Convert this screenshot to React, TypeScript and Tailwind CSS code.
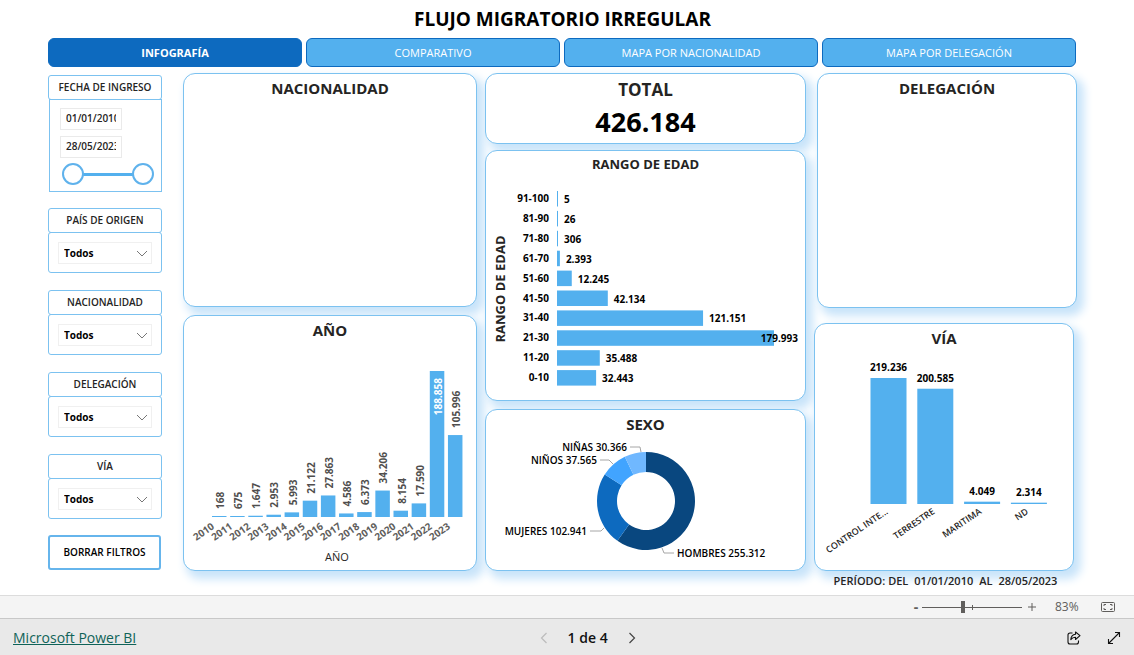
import type { ReactNode } from "react";
import clsx from "clsx";

const TABS = ["INFOGRAFÍA", "COMPARATIVO", "MAPA POR NACIONALIDAD", "MAPA POR DELEGACIÓN"];

const FILTERS = [
  { id: "pais", label: "PAÍS DE ORIGEN" },
  { id: "nacionalidad", label: "NACIONALIDAD" },
  { id: "delegacion", label: "DELEGACIÓN" },
  { id: "via", label: "VÍA" },
];

const YEARS = [
  { year: 2010, total: 168 },
  { year: 2011, total: 675 },
  { year: 2012, total: 1647 },
  { year: 2013, total: 2953 },
  { year: 2014, total: 5993 },
  { year: 2015, total: 21122 },
  { year: 2016, total: 27863 },
  { year: 2017, total: 4586 },
  { year: 2018, total: 6373 },
  { year: 2019, total: 34206 },
  { year: 2020, total: 8154 },
  { year: 2021, total: 17590 },
  { year: 2022, total: 188858 },
  { year: 2023, total: 105996 },
];

const AGES = [
  { range: "91-100", total: 5 },
  { range: "81-90", total: 26 },
  { range: "71-80", total: 306 },
  { range: "61-70", total: 2393 },
  { range: "51-60", total: 12245 },
  { range: "41-50", total: 42134 },
  { range: "31-40", total: 121151 },
  { range: "21-30", total: 179993 },
  { range: "11-20", total: 35488 },
  { range: "0-10", total: 32443 },
];

const ROUTES = [
  { name: "CONTROL INTE...", total: 219236 },
  { name: "TERRESTRE", total: 200585 },
  { name: "MARITIMA", total: 4049 },
  { name: "ND", total: 2314 },
];

type Slice = {
  name: string;
  total: number;
  color: string;
  line: string;
  x: number;
  y: number;
  anchor: "start" | "end";
};

const SEXES: Slice[] = [
  { name: "HOMBRES", total: 255312, color: "#09477f", line: "176,106 178,111 188,111", x: 191, y: 115, anchor: "start" },
  { name: "MUJERES", total: 102941, color: "#0d6abf", line: "118,86 115,89 104,89", x: 101, y: 93, anchor: "end" },
  { name: "NIÑOS", total: 37565, color: "#41a4ff", line: "127,22 123,18 114,18", x: 111, y: 22, anchor: "end" },
  { name: "NIÑAS", total: 30366, color: "#70b8ff", line: "155,10 154,5 144,5", x: 141, y: 9, anchor: "end" },
];

// thousands separated by dots
const format = (n: number) => String(n).replace(/\B(?=(\d{3})+$)/g, ".");

function Card({ title, titleClass, className, children }: { title: string; titleClass?: string; className?: string; children?: ReactNode }) {
  return (
    <section
      className={clsx(
        "rounded-xl border border-[#7cc2f0] bg-white shadow-[5px_6px_10px_2px_#c8e4fa]",
        className
      )}
    >
      <h2 className={clsx("text-center font-bold text-[#252423]", titleClass ?? "h-8 text-[15px] leading-7")}>{title}</h2>
      {children}
    </section>
  );
}

function YearChart() {
  return (
    <svg viewBox="0 0 292 222" className="block w-full" role="img" aria-label="Total por año">
      {YEARS.map(({ year, total }, i) => {
        const x = 28 + i * 18.15;
        const h = Math.max(1, (total / 188858) * 146);
        const inside = year === 2022;
        return (
          <g key={year}>
            <rect x={x} y={169 - h} width="14.5" height={h} fill="#53b0ee" />
            <text
              transform={`translate(${x + 12} ${inside ? 30 : 162 - h}) rotate(-90)`}
              textAnchor={inside ? "end" : "start"}
              fontSize="10"
              fontWeight="700"
              fill={inside ? "#fff" : "#4f4e4d"}
            >
              {format(total)}
            </text>
            <text
              transform={`translate(${x + 3} 180) rotate(-35)`}
              textAnchor="end"
              fontSize="10"
              fontWeight="700"
              fill="#605e5c"
            >
              {year}
            </text>
          </g>
        );
      })}
      <text x="153" y="213" textAnchor="middle" fontSize="11" fill="#252423">
        AÑO
      </text>
    </svg>
  );
}

function AgeChart() {
  return (
    <svg viewBox="0 0 319 225" className="block w-full" role="img" aria-label="Total por rango de edad">
      <text transform="translate(19 114) rotate(-90)" textAnchor="middle" fontSize="13" fontWeight="700" fill="#252423">
        RANGO DE EDAD
      </text>
      {AGES.map(({ range, total }, i) => {
        const y = 16 + i * 19.9;
        const w = Math.max(1, (total / 179993) * 217);
        const overflow = w > 200;
        return (
          <g key={range} fontSize="10" fontWeight="700">
            <rect x="71" y={y} width={w} height="15.5" fill="#53b0ee" />
            <text x="63" y={y + 11} textAnchor="end">
              {range}
            </text>
            <text x={overflow ? 312 : 77 + w} y={y + 12} textAnchor={overflow ? "end" : "start"}>
              {format(total)}
            </text>
          </g>
        );
      })}
    </svg>
  );
}

function SexChart() {
  const sum = SEXES.reduce((acc, s) => acc + s.total, 0);
  const point = (fraction: number, r: number) => {
    const a = fraction * 2 * Math.PI;
    return `${160 + r * Math.sin(a)} ${59 - r * Math.cos(a)}`;
  };
  let start = 0;

  return (
    <svg viewBox="0 -6 319 134" className="block w-full" role="img" aria-label="Total por sexo">
      {SEXES.map((s) => {
        const from = start;
        const to = start + s.total / sum;
        start = to;
        const large = to - from > 0.5 ? 1 : 0;
        return (
          <g key={s.name}>
            <path
              d={`M${point(from, 49)} A49 49 0 ${large} 1 ${point(to, 49)} L${point(to, 29)} A29 29 0 ${large} 0 ${point(from, 29)} Z`}
              fill={s.color}
            />
            <polyline points={s.line} fill="none" stroke="#a6a6a6" />
            <text x={s.x} y={s.y} textAnchor={s.anchor} fontSize="10" fontWeight="600">
              {`${s.name} ${format(s.total)}`}
            </text>
          </g>
        );
      })}
    </svg>
  );
}

function RouteChart() {
  return (
    <svg viewBox="0 0 258 214" className="block w-full" role="img" aria-label="Total por vía">
      {ROUTES.map(({ name, total }, i) => {
        const x = 55.5 + i * 46.8;
        const h = (total / 219236) * 126;
        return (
          <g key={name} fontSize="10" fontWeight="700">
            <rect x={x} y={148 - h} width="36" height={h} fill="#53b0ee" />
            <text x={x + 18} y={141 - h} textAnchor="middle">
              {format(total)}
            </text>
            <text
              transform={`translate(${x + 18} 157) rotate(-34)`}
              textAnchor="end"
              fontSize="9"
              fontWeight="600"
              fill="#252423"
            >
              {name}
            </text>
          </g>
        );
      })}
    </svg>
  );
}

const filterTitle = "flex h-[25px] items-center justify-center rounded-[3px] border border-[#7cc2f0] text-[10px] font-semibold text-[#252423]";
const dateInput = "block h-[22px] w-[62px] border border-[#eaeaea] px-[5px] pb-0.5 text-[10px] font-semibold text-[#252423]";
const rangeThumb =
  "pointer-events-none absolute inset-0 h-[22px] w-full appearance-none bg-transparent [&::-webkit-slider-thumb]:pointer-events-auto [&::-webkit-slider-thumb]:size-[22px] [&::-webkit-slider-thumb]:appearance-none [&::-webkit-slider-thumb]:rounded-full [&::-webkit-slider-thumb]:border-2 [&::-webkit-slider-thumb]:border-[#5fb2ec] [&::-webkit-slider-thumb]:bg-white";

function Sidebar() {
  return (
    <aside className="mt-0.5 flex w-[114px] shrink-0 flex-col gap-4">
      <fieldset>
        <div className={filterTitle}>FECHA DE INGRESO</div>
        <div className="-mt-px ml-px flex h-[93px] flex-col gap-1.5 border border-[#7cc2f0] pt-2 pl-2.5">
          <input className={dateInput} aria-label="Fecha inicial" defaultValue="01/01/2010" />
          <input className={dateInput} aria-label="Fecha final" defaultValue="28/05/2023" />
          <div className="-mt-px ml-0.5 w-[92px]">
            <div className="relative flex h-[22px] items-center px-5">
              <div className="h-[3px] w-full bg-[#53b0ee]" />
              <input type="range" className={rangeThumb} aria-label="Desde" defaultValue={0} />
              <input type="range" className={rangeThumb} aria-label="Hasta" defaultValue={100} />
            </div>
          </div>
        </div>
      </fieldset>

      <div className="flex flex-col gap-[17px]">
        {FILTERS.map((f) => (
          <div key={f.id}>
            <label htmlFor={f.id} className={filterTitle}>
              {f.label}
            </label>
            <div className="-mt-px flex h-[41px] items-center rounded-[3px] border border-[#7cc2f0] px-[9px]">
              <div className="relative w-full">
                <select
                  id={f.id}
                  className="block h-[22px] w-full appearance-none border border-[#f0f0f0] bg-white pt-0.5 pl-[5px] text-[10px] font-bold text-black"
                >
                  <option>Todos</option>
                </select>
                <svg viewBox="0 0 12 7" className="pointer-events-none absolute top-2 right-1 h-[7px] w-3" fill="none" stroke="#777">
                  <path d="M1 1l5 5 5-5" />
                </svg>
              </div>
            </div>
          </div>
        ))}
      </div>

      <button className="h-[35px] w-[113px] rounded-[3px] border-2 border-[#66b5ec] bg-white text-[10px] font-semibold text-black">
        BORRAR FILTROS
      </button>
    </aside>
  );
}

function ZoomBar() {
  return (
    <div className="flex h-[23px] items-center justify-end border-t border-[#dcdcdc] bg-[#f4f4f4] pr-[19px] text-[#605e5c]">
      <button className="w-3 text-sm leading-none font-bold" aria-label="Alejar">
        -
      </button>
      <div className="relative flex w-[100px] items-center">
        <input
          type="range"
          aria-label="Zoom"
          defaultValue={41}
          className="h-3 w-full appearance-none bg-transparent [&::-webkit-slider-runnable-track]:h-px [&::-webkit-slider-runnable-track]:bg-[#605e5c] [&::-webkit-slider-thumb]:-mt-1.5 [&::-webkit-slider-thumb]:h-3 [&::-webkit-slider-thumb]:w-1 [&::-webkit-slider-thumb]:appearance-none [&::-webkit-slider-thumb]:bg-[#605e5c]"
        />
        <span className="pointer-events-none absolute left-1/2 h-[5px] w-px bg-[#605e5c]" />
      </div>
      <button className="ml-1 flex w-3 justify-center" aria-label="Acercar">
        <svg viewBox="0 0 8 8" className="size-2" stroke="currentColor">
          <path d="M4 0v8M0 4h8" />
        </svg>
      </button>
      <span className="ml-[17px] w-[26px] text-xs">83%</span>
      <button className="ml-5" aria-label="Ajustar a la página">
        <svg viewBox="0 0 14 10" className="h-2.5 w-3.5" fill="none" stroke="currentColor">
          <rect x=".5" y=".5" width="13" height="9" rx="1" />
          <path d="M5 2.5H3V4M9 2.5h2V4M3 6v1.5h2M11 6v1.5H9" />
        </svg>
      </button>
    </div>
  );
}

function Footer() {
  return (
    <footer className="flex h-[37px] items-center justify-between border-t border-[#c8c8c8] bg-[#e9e9e9] pt-0.5 pr-[13px] pl-[13px]">
      <a href="#" className="text-sm text-[#0f6358] underline">
        Microsoft Power BI
      </a>
      <nav className="flex items-center text-sm font-semibold text-[#111]" aria-label="Páginas">
        <button aria-label="Página anterior">
          <svg viewBox="0 0 8 12" className="h-3 w-2" fill="none" stroke="#bcbcbc" strokeWidth="1.2">
            <path d="M6.5 1l-5 5 5 5" />
          </svg>
        </button>
        <span className="mx-5">1 de 4</span>
        <button aria-label="Página siguiente">
          <svg viewBox="0 0 8 12" className="h-3 w-2" fill="none" stroke="#444" strokeWidth="1.2">
            <path d="M1.5 1l5 5-5 5" />
          </svg>
        </button>
      </nav>
      <div className="flex items-center gap-[26px] pl-7">
        <button aria-label="Compartir">
          <svg viewBox="0 0 14 14" className="size-3.5" fill="none" stroke="#111" strokeWidth="1.1" strokeLinejoin="round">
            <path d="M5.5 2H3a2 2 0 00-2 2v7a2 2 0 002 2h6.500a2 2 0 002-2V9.500" />
            <path d="M8.500 1l4.500 3.700-4.500 3.800V6.300C6.300 6.200 5 7 3.800 8.600 4 5.500 5.500 3.500 8.500 3.200z" />
          </svg>
        </button>
        <button aria-label="Pantalla completa">
          <svg viewBox="0 0 14 14" className="size-3.5" fill="none" stroke="#111" strokeWidth="1.1">
            <path d="M1.500 12.500l11-11M8 1.500h4.500V6M1.500 8v4.500H6" />
          </svg>
        </button>
      </div>
    </footer>
  );
}

export default function App() {
  return (
    <div className="bg-white font-['Open_Sans','Noto_Sans',sans-serif] text-black">
      <main className="pr-[57px] pb-1.5 pl-12">
        <h1 className="h-[38px] text-center text-[19px] leading-[38px] font-bold">FLUJO MIGRATORIO IRREGULAR</h1>

        <nav className="mr-px grid grid-cols-4 gap-1" aria-label="Secciones">
          {TABS.map((tab, i) => (
            <button
              key={tab}
              className={clsx(
                "h-[29px] rounded-md border border-[#0d6abf] pt-0.5 text-[11px] text-white",
                i === 0 ? "bg-[#0d6abf] font-bold" : "bg-[#53b0ee]"
              )}
            >
              {tab}
            </button>
          ))}
        </nav>

        <div className="mt-1.5 flex gap-[21px]">
          <Sidebar />

          <div className="grid flex-1 grid-cols-[294fr_321fr_263fr] items-start gap-2">
            <div className="flex flex-col gap-2">
              <Card title="NACIONALIDAD" className="h-[234px]" />
              <Card title="AÑO">
                <YearChart />
              </Card>
            </div>

            <div className="flex flex-col">
              <Card title="TOTAL" titleClass="pt-1 text-[17px] leading-6" className="h-[71px]">
                <p className="text-center text-[27px] leading-10 font-bold">{format(426184)}</p>
              </Card>
              <Card title="RANGO DE EDAD" titleClass="h-6 text-[13px] leading-[26px]" className="mt-1.5">
                <AgeChart />
              </Card>
              <Card title="SEXO" titleClass="h-[26px] text-[15px] leading-7" className="mt-2">
                <SexChart />
              </Card>
            </div>

            <div className="flex flex-col">
              <Card title="DELEGACIÓN" className="ml-[3px] h-[235px]" />
              <Card title="VÍA" className="mt-[15px] mr-[3px]">
                <RouteChart />
              </Card>
              <p className="relative mt-0.5 flex h-4 justify-center gap-1.5 text-[11px] leading-4 font-semibold text-[#252423]">
                <span>PERÍODO: DEL</span>
                <span>01/01/2010</span>
                <span>AL</span>
                <span>28/05/2023</span>
              </p>
            </div>
          </div>
        </div>
      </main>
      <ZoomBar />
      <Footer />
    </div>
  );
}
